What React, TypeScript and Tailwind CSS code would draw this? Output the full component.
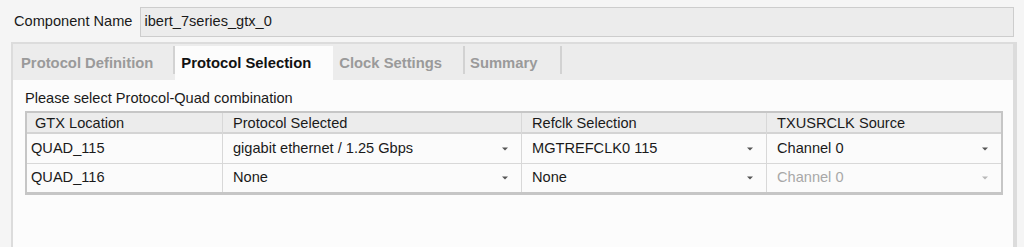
import React from 'react';

type Cell = { text: string; drop?: boolean; muted?: boolean };

const rows: Cell[][] = [
  [
    { text: 'QUAD_115' },
    { text: 'gigabit ethernet / 1.25 Gbps', drop: true },
    { text: 'MGTREFCLK0 115', drop: true },
    { text: 'Channel 0', drop: true },
  ],
  [
    { text: 'QUAD_116' },
    { text: 'None', drop: true },
    { text: 'None', drop: true },
    { text: 'Channel 0', drop: true, muted: true },
  ],
];

const headers = ['GTX Location', 'Protocol Selected', 'Refclk Selection', 'TXUSRCLK Source'];

function Arrow({ muted }: { muted?: boolean }) {
  return (
    <svg width="6" height="4" viewBox="0 0 6 4" className="shrink-0">
      <path d="M0 0.5 H6 L3 3.5 Z" fill={muted ? '#b8b8b8' : '#555555'} />
    </svg>
  );
}

function Sep() {
  return <div className="w-[2px] h-[28px] mb-[6px] bg-[#d2d2d2]" />;
}

export default function App() {
  return (
    <div
      className="w-[1024px] h-[247px] overflow-hidden bg-[#f5f5f5] text-[14.6px] text-[#1a1a1a]"
      style={{ fontFamily: '"Liberation Sans", Arial, sans-serif' }}
    >
      {/* component name row */}
      <div className="flex items-center pt-[7px] pl-[14px] pr-[10px]">
        <span className="mr-[8px]">Component Name</span>
        <div className="flex-1 h-[30px] flex items-center border border-[#cdcdcd] bg-[#ececec] px-[3px]">
          ibert_7series_gtx_0
        </div>
      </div>

      {/* tabbed panel */}
      <div className="ml-[11px] mr-[7px] mt-[5px] h-[220px] border-[2px] border-r-[4px] border-[#dcdcdc] flex flex-col">
        <div className="h-[36px] bg-[#ececec] flex items-end pl-[8px] font-bold text-[14.8px]">
          <div className="h-[34px] pr-[20px] flex items-center text-[#9a9a9a]">Protocol Definition</div>
          <Sep />
          <div className="h-[34px] pl-[6px] pr-[22px] flex items-center bg-[#fcfcfc] text-[#111]">
            Protocol Selection
          </div>
          <div className="h-[34px] pl-[6px] pr-[21px] flex items-center text-[#9a9a9a]">Clock Settings</div>
          <Sep />
          <div className="h-[34px] pl-[5px] pr-[22px] flex items-center text-[#9a9a9a]">Summary</div>
          <Sep />
        </div>

        <div className="flex-1 bg-[#fcfcfc] pl-[12px] pr-[10px] pt-[10px]">
          <div className="leading-[16px] mb-[5px]">Please select Protocol-Quad combination</div>
          <div className="border-[2px] border-[#c6c6c6] border-b-[3px]">
            <div className="grid grid-cols-[195px_299px_245px_1fr] h-[21px] bg-[#ececec] border-b-[2px] border-[#d4d4d4]">
              {headers.map((h, i) => (
                <div
                  key={h}
                  className={`flex items-center ${i === 0 ? 'pl-[8px]' : 'pl-[10px] border-l border-[#d8d8d8]'}`}
                >
                  {h}
                </div>
              ))}
            </div>
            {rows.map((r, ri) => (
              <div
                key={ri}
                className={`grid grid-cols-[195px_299px_245px_1fr] h-[29px] bg-[#fbfbfb] ${ri > 0 ? 'border-t border-[#d8d8d8]' : ''}`}
              >
                {r.map((c, ci) => (
                  <div
                    key={ci}
                    className={`flex items-center justify-between ${ci === 0 ? 'pl-[4px]' : 'pl-[10px] pr-[13px] border-l border-[#d8d8d8]'} ${c.muted ? 'text-[#a8a8a8]' : ''}`}
                  >
                    <span>{c.text}</span>
                    {c.drop && <Arrow muted={c.muted} />}
                  </div>
                ))}
              </div>
            ))}
          </div>
        </div>
      </div>
    </div>
  );
}
